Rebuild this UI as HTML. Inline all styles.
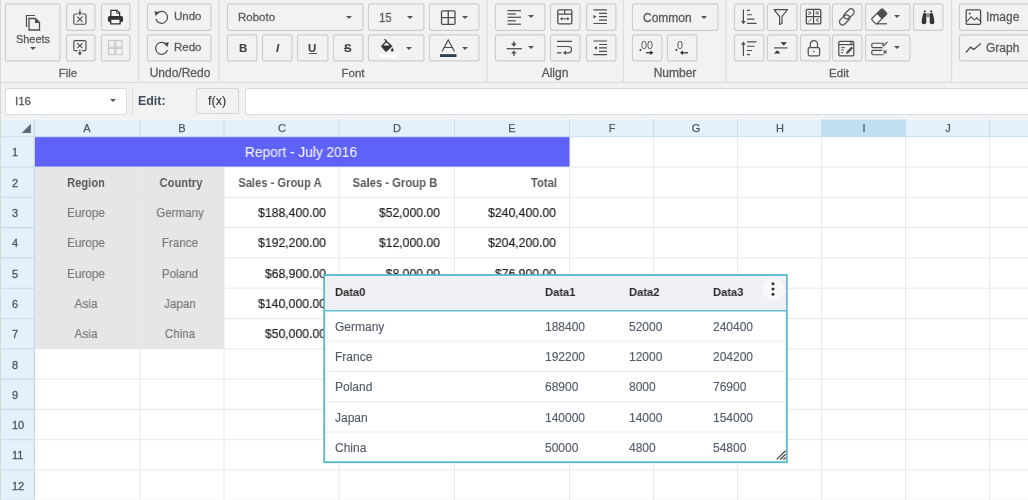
<!DOCTYPE html><html><head><meta charset="utf-8"><style>
*{box-sizing:border-box;margin:0;padding:0}
html,body{width:1028px;height:500px;overflow:hidden;background:#fff;font-family:"Liberation Sans",sans-serif}
.ab{position:absolute}
.btn{position:absolute;border:1px solid #d6d6d6;border-radius:2px;background:#f2f2f2}
.sep{position:absolute;top:0;width:1px;height:83px;background:#dcdcdc}
.caret{position:absolute;width:0;height:0;border-left:3.5px solid transparent;border-right:3.5px solid transparent;border-top:3.5px solid #555}
.t{position:absolute;white-space:nowrap;transform-origin:0 0;will-change:transform}
svg{position:absolute;overflow:visible}
.c{position:absolute;white-space:nowrap}
</style></head><body>
<div class="ab" style="left:0;top:0;width:1028px;height:83px;background:#f2f2f2"></div>
<div class="ab" style="left:0;top:82px;width:1028px;height:1px;background:#dadada"></div>
<div class="t" style="left:-81.80px;width:300px;text-align:center;top:68.07px;font-size:11.5px;line-height:11.5px;color:#5c5c5c;font-weight:normal;transform:scaleX(1.0);transform-origin:50% 0;-webkit-text-stroke:0.3px #5c5c5c;">File</div>
<div class="t" style="left:29.80px;width:300px;text-align:center;top:67.34px;font-size:12px;line-height:12px;color:#5c5c5c;font-weight:normal;transform:scaleX(1.0);transform-origin:50% 0;-webkit-text-stroke:0.3px #5c5c5c;">Undo/Redo</div>
<div class="t" style="left:203.00px;width:300px;text-align:center;top:67.87px;font-size:11.5px;line-height:11.5px;color:#5c5c5c;font-weight:normal;transform:scaleX(1.0);transform-origin:50% 0;-webkit-text-stroke:0.3px #5c5c5c;">Font</div>
<div class="t" style="left:405.30px;width:300px;text-align:center;top:67.44px;font-size:12px;line-height:12px;color:#5c5c5c;font-weight:normal;transform:scaleX(1.0);transform-origin:50% 0;-webkit-text-stroke:0.3px #5c5c5c;">Align</div>
<div class="t" style="left:524.70px;width:300px;text-align:center;top:67.44px;font-size:12px;line-height:12px;color:#5c5c5c;font-weight:normal;transform:scaleX(1.0);transform-origin:50% 0;-webkit-text-stroke:0.3px #5c5c5c;">Number</div>
<div class="t" style="left:688.50px;width:300px;text-align:center;top:67.87px;font-size:11.5px;line-height:11.5px;color:#5c5c5c;font-weight:normal;transform:scaleX(1.0);transform-origin:50% 0;-webkit-text-stroke:0.3px #5c5c5c;">Edit</div>
<div class="t" style="left:-117.50px;width:300px;text-align:center;top:34.09px;font-size:11px;line-height:11px;color:#5c5c5c;font-weight:normal;transform:scaleX(1.0);transform-origin:50% 0;-webkit-text-stroke:0.3px #5c5c5c;">Sheets</div>
<div class="caret" style="left:29.5px;top:47.0px;border-top-color:#555"></div>
<div class="t" style="left:174.30px;top:11.47px;font-size:11.5px;line-height:11.5px;color:#5c5c5c;font-weight:normal;-webkit-text-stroke:0.3px #5c5c5c;">Undo</div>
<div class="t" style="left:174.30px;top:42.07px;font-size:11.5px;line-height:11.5px;color:#5c5c5c;font-weight:normal;-webkit-text-stroke:0.3px #5c5c5c;">Redo</div>
<div class="t" style="left:237.60px;top:11.77px;font-size:11.5px;line-height:11.5px;color:#5c5c5c;font-weight:normal;-webkit-text-stroke:0.3px #5c5c5c;">Roboto</div>
<div class="caret" style="left:345.5px;top:15.5px;border-top-color:#555"></div>
<div class="t" style="left:379.20px;top:11.84px;font-size:12px;line-height:12px;color:#5c5c5c;font-weight:normal;transform:scaleX(0.94);-webkit-text-stroke:0.3px #5c5c5c;">15</div>
<div class="caret" style="left:406.5px;top:15.5px;border-top-color:#555"></div>
<div class="caret" style="left:461.5px;top:15.5px;border-top-color:#555"></div>
<div class="t" style="left:238.60px;top:42.87px;font-size:11.5px;line-height:11.5px;color:#444;font-weight:bold;-webkit-text-stroke:0.1px #444;">B</div>
<div class="t" style="left:276.20px;top:42.87px;font-size:11.5px;line-height:11.5px;color:#444;font-weight:bold;font-style:italic;-webkit-text-stroke:0.1px #444;">I</div>
<div class="t" style="left:308.30px;top:42.67px;font-size:11.5px;line-height:11.5px;color:#444;font-weight:bold;-webkit-text-stroke:0.1px #444;">U</div>
<div class="t" style="left:344.00px;top:42.67px;font-size:11.5px;line-height:11.5px;color:#444;font-weight:bold;-webkit-text-stroke:0.1px #444;">S</div>
<div class="ab" style="left:308.6px;top:53.4px;width:8px;height:1px;background:#555"></div>
<div class="ab" style="left:343.8px;top:48.3px;width:5px;height:1px;background:#444"></div>
<div class="caret" style="left:406.0px;top:46.5px;border-top-color:#555"></div>
<div class="caret" style="left:461.5px;top:46.5px;border-top-color:#555"></div>
<div class="caret" style="left:528.3px;top:15.0px;border-top-color:#555"></div>
<div class="caret" style="left:528.3px;top:46.3px;border-top-color:#555"></div>
<div class="t" style="left:643.00px;top:12.14px;font-size:12px;line-height:12px;color:#5c5c5c;font-weight:normal;-webkit-text-stroke:0.3px #5c5c5c;">Common</div>
<div class="caret" style="left:700.5px;top:15.5px;border-top-color:#555"></div>
<div class="caret" style="left:893.5px;top:15.0px;border-top-color:#555"></div>
<div class="caret" style="left:893.5px;top:46.0px;border-top-color:#555"></div>
<div class="t" style="left:986.30px;top:11.44px;font-size:12px;line-height:12px;color:#5c5c5c;font-weight:normal;-webkit-text-stroke:0.3px #5c5c5c;">Image</div>
<div class="t" style="left:986.30px;top:42.14px;font-size:12px;line-height:12px;color:#5c5c5c;font-weight:normal;-webkit-text-stroke:0.3px #5c5c5c;">Graph</div>
<svg style="left:0;top:0" width="1028" height="100"><rect x="138.0" y="0" width="1.2" height="82.5" fill="#dddddd"/><rect x="218.4" y="0" width="1.2" height="82.5" fill="#dddddd"/><rect x="486.4" y="0" width="1.2" height="82.5" fill="#dddddd"/><rect x="622.9" y="0" width="1.2" height="82.5" fill="#dddddd"/><rect x="725.4" y="0" width="1.2" height="82.5" fill="#dddddd"/><rect x="951.0" y="0" width="1.2" height="82.5" fill="#dddddd"/><rect x="5.5" y="3.9" width="54.4" height="57.00" rx="2" fill="none" stroke="#cdcdcd" stroke-width="1.15"/><rect x="66.5" y="3.9" width="28.4" height="26.40" rx="2" fill="none" stroke="#cdcdcd" stroke-width="1.15"/><rect x="101.5" y="3.9" width="28.4" height="26.40" rx="2" fill="none" stroke="#cdcdcd" stroke-width="1.15"/><rect x="66.5" y="34.8" width="28.4" height="26.10" rx="2" fill="none" stroke="#cdcdcd" stroke-width="1.15"/><rect x="101.5" y="34.8" width="28.4" height="26.10" rx="2" fill="none" stroke="#cdcdcd" stroke-width="1.15"/><rect x="147.5" y="3.9" width="63.4" height="26.40" rx="2" fill="none" stroke="#cdcdcd" stroke-width="1.15"/><rect x="147.5" y="34.8" width="63.4" height="26.10" rx="2" fill="none" stroke="#cdcdcd" stroke-width="1.15"/><rect x="227.5" y="3.9" width="135.4" height="26.40" rx="2" fill="none" stroke="#cdcdcd" stroke-width="1.15"/><rect x="368.5" y="3.9" width="55.4" height="26.40" rx="2" fill="none" stroke="#cdcdcd" stroke-width="1.15"/><rect x="429.5" y="3.9" width="49.4" height="26.40" rx="2" fill="none" stroke="#cdcdcd" stroke-width="1.15"/><rect x="227.5" y="34.8" width="29.4" height="26.10" rx="2" fill="none" stroke="#cdcdcd" stroke-width="1.15"/><rect x="262.5" y="34.8" width="29.4" height="26.10" rx="2" fill="none" stroke="#cdcdcd" stroke-width="1.15"/><rect x="297.5" y="34.8" width="30.4" height="26.10" rx="2" fill="none" stroke="#cdcdcd" stroke-width="1.15"/><rect x="333.5" y="34.8" width="29.4" height="26.10" rx="2" fill="none" stroke="#cdcdcd" stroke-width="1.15"/><rect x="368.5" y="34.8" width="55.4" height="26.10" rx="2" fill="none" stroke="#cdcdcd" stroke-width="1.15"/><rect x="429.5" y="34.8" width="49.4" height="26.10" rx="2" fill="none" stroke="#cdcdcd" stroke-width="1.15"/><rect x="495.5" y="3.9" width="49.4" height="26.40" rx="2" fill="none" stroke="#cdcdcd" stroke-width="1.15"/><rect x="550.5" y="3.9" width="29.4" height="26.40" rx="2" fill="none" stroke="#cdcdcd" stroke-width="1.15"/><rect x="586.5" y="3.9" width="29.4" height="26.40" rx="2" fill="none" stroke="#cdcdcd" stroke-width="1.15"/><rect x="495.5" y="34.8" width="49.4" height="26.10" rx="2" fill="none" stroke="#cdcdcd" stroke-width="1.15"/><rect x="550.5" y="34.8" width="29.4" height="26.10" rx="2" fill="none" stroke="#cdcdcd" stroke-width="1.15"/><rect x="586.5" y="34.8" width="29.4" height="26.10" rx="2" fill="none" stroke="#cdcdcd" stroke-width="1.15"/><rect x="632.5" y="3.9" width="85.4" height="26.40" rx="2" fill="none" stroke="#cdcdcd" stroke-width="1.15"/><rect x="632.5" y="34.8" width="29.4" height="26.10" rx="2" fill="none" stroke="#cdcdcd" stroke-width="1.15"/><rect x="667.5" y="34.8" width="29.4" height="26.10" rx="2" fill="none" stroke="#cdcdcd" stroke-width="1.15"/><rect x="734.5" y="3.9" width="29.4" height="26.40" rx="2" fill="none" stroke="#cdcdcd" stroke-width="1.15"/><rect x="767.5" y="3.9" width="29.4" height="26.40" rx="2" fill="none" stroke="#cdcdcd" stroke-width="1.15"/><rect x="800.5" y="3.9" width="29.4" height="26.40" rx="2" fill="none" stroke="#cdcdcd" stroke-width="1.15"/><rect x="832.5" y="3.9" width="29.4" height="26.40" rx="2" fill="none" stroke="#cdcdcd" stroke-width="1.15"/><rect x="865.5" y="3.9" width="44.4" height="26.40" rx="2" fill="none" stroke="#cdcdcd" stroke-width="1.15"/><rect x="913.5" y="3.9" width="29.4" height="26.40" rx="2" fill="none" stroke="#cdcdcd" stroke-width="1.15"/><rect x="734.5" y="34.8" width="29.4" height="26.10" rx="2" fill="none" stroke="#cdcdcd" stroke-width="1.15"/><rect x="767.5" y="34.8" width="29.4" height="26.10" rx="2" fill="none" stroke="#cdcdcd" stroke-width="1.15"/><rect x="800.5" y="34.8" width="29.4" height="26.10" rx="2" fill="none" stroke="#cdcdcd" stroke-width="1.15"/><rect x="832.5" y="34.8" width="29.4" height="26.10" rx="2" fill="none" stroke="#cdcdcd" stroke-width="1.15"/><rect x="865.5" y="34.8" width="44.4" height="26.10" rx="2" fill="none" stroke="#cdcdcd" stroke-width="1.15"/><rect x="959.5" y="3.9" width="80.4" height="26.40" rx="2" fill="none" stroke="#cdcdcd" stroke-width="1.15"/><rect x="959.5" y="34.8" width="80.4" height="26.10" rx="2" fill="none" stroke="#cdcdcd" stroke-width="1.15"/></svg>
<svg style="left:0;top:0" width="1028" height="100"><path d="M26.5 27 V15.5 H35" fill="none" stroke="#4d4d4d" stroke-width="1.2"/><path d="M29 18.5 H35.5 L39.5 22.5 V30 H29 Z" fill="#f2f2f2" stroke="#4d4d4d" stroke-width="1.3"/><path d="M35 18.5 L39.5 23 H35 Z" fill="#4d4d4d"/><path d="M77.6 14 H75 Q73.8 14 73.8 15.2 V23 Q73.8 24.2 75 24.2 H84.8 Q86 24.2 86 23 V15.2 Q86 14 84.8 14 H82.2" fill="none" stroke="#4d4d4d" stroke-width="1.15"/><path d="M79.9 9.6 V13.5" stroke="#4d4d4d" stroke-width="1.1"/><path d="M77.7 12.6 L79.9 15.4 L82.1 12.6 Z" fill="#4d4d4d"/><path d="M77.3 16.6 L82.5 21.8 M82.5 16.6 L77.3 21.8" stroke="#4d4d4d" stroke-width="1.15"/><path d="M77.6 50.6 H75 Q73.8 50.6 73.8 49.4 V41.8 Q73.8 40.6 75 40.6 H84.8 Q86 40.6 86 41.8 V49.4 Q86 50.6 84.8 50.6 H82.2" fill="none" stroke="#4d4d4d" stroke-width="1.15"/><path d="M79.9 49.5 V53" stroke="#4d4d4d" stroke-width="1.1"/><path d="M77.7 52.4 L79.9 55.4 L82.1 52.4 Z" fill="#4d4d4d"/><path d="M77.3 43.2 L82.5 48.2 M82.5 43.2 L77.3 48.2" stroke="#4d4d4d" stroke-width="1.15"/><path d="M110.9 16.5 V10.4 H117 L119.6 13 V16.5" fill="#fafafa" stroke="#333" stroke-width="1.3"/><path d="M116.6 10.4 V13.4 H119.6" fill="none" stroke="#333" stroke-width="0.8"/><rect x="107.9" y="15.9" width="15.1" height="6.2" rx="1.6" fill="#333"/><path d="M110.7 19.8 V23.8 H120.1 V19.8" fill="#fafafa" stroke="#333" stroke-width="1.3"/><rect x="108.4" y="40.6" width="13.6" height="14.1" fill="none" stroke="#c6c6c6" stroke-width="1.1"/><path d="M114.6 40.6 V54.7 M116 40.6 V54.7 M108.4 47 H122 M108.4 48.4 H122" stroke="#c6c6c6" stroke-width="1"/><path d="M157.2 13.2 A6 6 0 1 1 155.8 19" fill="none" stroke="#4d4d4d" stroke-width="1.2"/><path d="M154.5 11 L159.5 12.5 L155.5 16 Z" fill="#4d4d4d"/><path d="M166 44.2 A6 6 0 1 0 167.4 50" fill="none" stroke="#4d4d4d" stroke-width="1.2"/><path d="M168.7 42 L163.7 43.5 L167.7 47 Z" fill="#4d4d4d"/><rect x="441.5" y="10.8" width="13.5" height="13.5" rx="1" fill="none" stroke="#4d4d4d" stroke-width="1.3"/><path d="M448.25 10.8 V24.3 M441.5 17.55 H455" stroke="#4d4d4d" stroke-width="1.3"/><path d="M381.2 46.3 L386.3 40.8 L392.2 46.2 L385.9 51.8 Z" fill="#333" stroke="#333" stroke-width="0.6" stroke-linejoin="round"/><path d="M383.3 45.6 L386.3 42.6 L389.7 45.6 Z" fill="#fafafa"/><path d="M384.6 39.2 L386.6 41.4" stroke="#333" stroke-width="1.3"/><path d="M392.3 47.6 Q390.6 50 391.2 50.9 Q392.3 52 393.4 50.9 Q394 50 392.3 47.6 Z" fill="#333"/><rect x="379.1" y="54.5" width="16.8" height="2.9" fill="#fff"/><path d="M442 51.5 L448.2 40 L454.5 51.5 M444 47.5 H452.5" fill="none" stroke="#4d4d4d" stroke-width="1.2"/><rect x="440" y="54.2" width="16.5" height="2.8" fill="#2c3e50"/><path d="M507.5 10.6 H521.0" stroke="#4d4d4d" stroke-width="1.2"/><path d="M507.5 14 H515.8" stroke="#4d4d4d" stroke-width="1.2"/><path d="M507.5 17.3 H521.0" stroke="#4d4d4d" stroke-width="1.2"/><path d="M507.5 20.8 H515.8" stroke="#4d4d4d" stroke-width="1.2"/><path d="M507.5 24.2 H521.0" stroke="#4d4d4d" stroke-width="1.2"/><path d="M506.7 48.7 H521.9" stroke="#4d4d4d" stroke-width="1.3"/><path d="M513.9 41.3 V44.5 M513.9 53 V56" stroke="#4d4d4d" stroke-width="1.3"/><path d="M511.1 43.6 L513.9 46.7 L516.7 43.6 Z M511.1 53.6 L513.9 50.5 L516.7 53.6 Z" fill="#4d4d4d"/><rect x="557.8" y="9.8" width="14" height="14" rx="1.2" fill="none" stroke="#4d4d4d" stroke-width="1.3"/><path d="M557.8 14.2 H571.8 M564.8 9.8 V14.2" stroke="#4d4d4d" stroke-width="1.2"/><path d="M561 18.8 H568.5" stroke="#4d4d4d" stroke-width="1"/><path d="M560 18.8 L562.3 17 V20.6 Z M569.5 18.8 L567.2 17 V20.6 Z" fill="#4d4d4d"/><path d="M593.5 9.8 H607 M599 13.3 H607 M599 16.7 H607 M599 20.1 H607 M593.5 23.5 H607" stroke="#4d4d4d" stroke-width="1.2"/><path d="M593.5 14.8 L596.5 16.7 L593.5 18.6 Z" fill="#4d4d4d"/><path d="M557 41.3 H572 M557 46.5 H568 Q571.5 46.5 571.5 49.2 Q571.5 52.8 568 52.8 H565.5 M557 52.8 H561.5" fill="none" stroke="#4d4d4d" stroke-width="1.2"/><path d="M563 52.8 L566 50.6 V55 Z" fill="#4d4d4d"/><path d="M593.5 41 H607 M599 44.5 H607 M599 47.9 H607 M599 51.3 H607 M593.5 54.7 H607" stroke="#4d4d4d" stroke-width="1.2"/><path d="M597 46 L594 47.9 L597 49.8 Z" fill="#4d4d4d"/><circle cx="640.4" cy="50" r="0.9" fill="#222"/><text x="641" y="49" font-family="Liberation Sans" font-size="11.5" fill="#555" textLength="12" lengthAdjust="spacingAndGlyphs">00</text><path d="M646 52.8 H651" stroke="#222" stroke-width="1.2"/><path d="M650.3 50.6 L653.3 52.8 L650.3 55 Z" fill="#222"/><circle cx="676.4" cy="50" r="0.9" fill="#222"/><text x="677" y="49" font-family="Liberation Sans" font-size="11.5" fill="#555" textLength="6" lengthAdjust="spacingAndGlyphs">0</text><path d="M682 52.8 H688" stroke="#222" stroke-width="1.2"/><path d="M683 50.6 L680 52.8 L683 55 Z" fill="#222"/><path d="M743.4 9.5 V22" stroke="#4d4d4d" stroke-width="1.2"/><path d="M741 21 L743.4 24.2 L745.8 21 Z" fill="#4d4d4d"/><path d="M747 10.4 H750 M747 14.8 H752 M747 19.1 H754.5 M747 23.4 H756.5" stroke="#4d4d4d" stroke-width="1.1"/><path d="M774 9.6 H787.5 L782 16.5 V23.5 L779.6 24.5 V16.5 Z" fill="none" stroke="#4d4d4d" stroke-width="1.2" stroke-linejoin="round"/><rect x="806.3" y="9.4" width="14.5" height="14.5" rx="1.2" fill="none" stroke="#4d4d4d" stroke-width="1.3"/><path d="M813.55 9.4 V23.9 M806.3 16.65 H820.8" stroke="#4d4d4d" stroke-width="1.1"/><path d="M808.2 11.6 L811 13.1 L808.2 14.6 M815.5 12 H819 M815.5 13.8 H819 M811.5 18.8 L808.5 21.8 M818.8 18.5 L816 20.1 L818.8 21.8" fill="none" stroke="#4d4d4d" stroke-width="0.9"/><g transform="translate(846.8 16.9) rotate(-45)" fill="none" stroke="#555" stroke-width="1.3"><rect x="-9.6" y="-2.6" width="11.8" height="6.2" rx="3.1"/><rect x="-2.2" y="-3.6" width="11.8" height="6.2" rx="3.1"/></g><g transform="translate(879.2 16.4) rotate(-45)"><rect x="-7.6" y="-3.6" width="15.2" height="7.2" rx="1" fill="#fafafa" stroke="#4d4d4d" stroke-width="1.2"/><rect x="0" y="-3.6" width="7.6" height="7.2" fill="#4d4d4d"/></g><path d="M876.6 23.8 H887" stroke="#4d4d4d" stroke-width="1.2"/><path d="M923.2 13.2 Q921.6 19 921.6 22.5 Q921.8 24.2 923.8 24.2 Q926.2 24.2 926.3 22.5 V13.2 Z M932.8 13.2 Q934.4 19 934.4 22.5 Q934.2 24.2 932.2 24.2 Q929.8 24.2 929.7 22.5 V13.2 Z" fill="#333"/><rect x="923.6" y="10.4" width="2.2" height="2" rx="0.8" fill="#333"/><rect x="930.2" y="10.4" width="2.2" height="2" rx="0.8" fill="#333"/><rect x="926" y="13.5" width="4" height="3.6" fill="#888"/><path d="M743.4 44 V56" stroke="#4d4d4d" stroke-width="1.2"/><path d="M741 44.8 L743.4 41.5 L745.8 44.8 Z" fill="#4d4d4d"/><path d="M747 41.9 H756.5 M747 46.2 H754.5 M747 50.5 H752 M747 54.6 H750" stroke="#4d4d4d" stroke-width="1.1"/><path d="M774 47.9 H787.5" stroke="#4d4d4d" stroke-width="1.2"/><path d="M780.5 42.3 H787 L783.75 45.6 Z M774 53.6 H780.5 L777.25 50.3 Z" fill="#333"/><path d="M810.3 47.5 V44.3 A3.6 3.6 0 0 1 817.5 44.3 V47.5" fill="none" stroke="#4d4d4d" stroke-width="1.2"/><rect x="808.2" y="47.6" width="11.4" height="8.2" rx="1.2" fill="none" stroke="#4d4d4d" stroke-width="1.2"/><circle cx="813.9" cy="51.6" r="0.8" fill="#4d4d4d"/><rect x="838.8" y="41.3" width="15" height="14.5" rx="1" fill="none" stroke="#4d4d4d" stroke-width="1.2"/><path d="M838.8 44.6 H853.8" stroke="#4d4d4d" stroke-width="1.2"/><circle cx="851.3" cy="43" r="1" fill="none" stroke="#4d4d4d" stroke-width="0.8"/><path d="M841 47.6 H845 M841 50 H844 M841 52.5 H843" stroke="#4d4d4d" stroke-width="0.9"/><path d="M846 54 L846.7 51.5 L851.5 46.6 L853 48.2 L848.2 53.2 Z" fill="#4d4d4d"/><rect x="871.8" y="43.2" width="12.4" height="4.4" rx="1.2" fill="none" stroke="#4d4d4d" stroke-width="1.15"/><rect x="871.8" y="50.3" width="12.4" height="4.4" rx="1.2" fill="none" stroke="#4d4d4d" stroke-width="1.15"/><path d="M881 44.6 L883.5 46.6 L888 41.6" fill="none" stroke="#f2f2f2" stroke-width="2.6"/><path d="M881.8 44.3 L883.6 45.9 L887.4 41.9" fill="none" stroke="#4d4d4d" stroke-width="1.1"/><path d="M882.5 49.6 L887.4 54 M887.4 49.6 L882.5 54" stroke="#f2f2f2" stroke-width="2.4"/><path d="M883.6 50.4 L886.6 53.4 M886.6 50.4 L883.6 53.4" stroke="#4d4d4d" stroke-width="1.1"/><rect x="966.2" y="9.9" width="14.4" height="14.4" rx="1" fill="none" stroke="#4d4d4d" stroke-width="1.3"/><path d="M967 21.5 L971 16.8 L974.5 19.8 L976.8 17.8 L980 20.8" fill="none" stroke="#4d4d4d" stroke-width="1.1"/><circle cx="969.7" cy="13.4" r="1" fill="#4d4d4d"/><path d="M966 52.5 L970.5 47.2 L973.8 49.4 L980.8 43.6" fill="none" stroke="#4d4d4d" stroke-width="1.3"/></svg>
<div class="ab" style="left:0;top:83px;width:1028px;height:36px;background:#f2f2f2"></div>
<div class="ab" style="left:4.6px;top:88px;width:122.6px;height:26.8px;background:#fff;border:1px solid #d3dde8;border-radius:2px"></div>
<div class="t" style="left:14.60px;top:96.37px;font-size:11.5px;line-height:11.5px;color:#5c5c5c;font-weight:normal;-webkit-text-stroke:0.3px #5c5c5c;">I16</div>
<div class="caret" style="left:110.1px;top:99.3px;border-top-color:#555"></div>
<div class="ab" style="left:132px;top:87px;width:1px;height:29px;background:#dcdcdc"></div>
<div class="t" style="left:138.20px;top:95.10px;font-size:12.4px;line-height:12.4px;color:#3f4c5b;font-weight:bold;">Edit:</div>
<div class="ab" style="left:196px;top:88px;width:43px;height:26px;border:1px solid #d6d6d6;border-radius:2px;background:#f2f2f2"></div>
<div class="t" style="left:208.00px;top:95.34px;font-size:12px;line-height:12px;color:#333;font-weight:normal;transform:scaleX(1.05);-webkit-text-stroke:0.1px #333;">f(x)</div>
<div class="ab" style="left:245px;top:88px;width:800px;height:27px;background:#fff;border:1px solid #d3dde8;border-radius:2px"></div>
<div class="ab" style="left:0;top:0;width:1px;height:500px;background:#d8d8d8"></div>
<svg style="left:0;top:0" width="1028" height="500"><rect x="1" y="119" width="1027" height="381" fill="#fff"/><rect x="1" y="119.5" width="1027" height="17.5" fill="#e4f1fa"/><rect x="821.5" y="119.5" width="84.0" height="17.3" fill="#c1dff2"/><rect x="1" y="136.7" width="33.5" height="364" fill="#e4f1fa"/><rect x="34.5" y="167.0" width="189.5" height="181.79999999999995" fill="#e6e6e6"/><line x1="140" y1="137" x2="140" y2="500" stroke="#e6e8eb" stroke-width="1"/><line x1="224" y1="137" x2="224" y2="500" stroke="#e6e8eb" stroke-width="1"/><line x1="339" y1="137" x2="339" y2="500" stroke="#e6e8eb" stroke-width="1"/><line x1="454.5" y1="137" x2="454.5" y2="500" stroke="#e6e8eb" stroke-width="1"/><line x1="569.5" y1="137" x2="569.5" y2="500" stroke="#e6e8eb" stroke-width="1"/><line x1="653.7" y1="137" x2="653.7" y2="500" stroke="#e6e8eb" stroke-width="1"/><line x1="737.6" y1="137" x2="737.6" y2="500" stroke="#e6e8eb" stroke-width="1"/><line x1="821.5" y1="137" x2="821.5" y2="500" stroke="#e6e8eb" stroke-width="1"/><line x1="905.5" y1="137" x2="905.5" y2="500" stroke="#e6e8eb" stroke-width="1"/><line x1="989.6" y1="137" x2="989.6" y2="500" stroke="#e6e8eb" stroke-width="1"/><line x1="1073.6" y1="137" x2="1073.6" y2="500" stroke="#e6e8eb" stroke-width="1"/><line x1="35" y1="167.00" x2="1028" y2="167.00" stroke="#e6e8eb" stroke-width="1"/><line x1="35" y1="197.30" x2="1028" y2="197.30" stroke="#e6e8eb" stroke-width="1"/><line x1="35" y1="227.60" x2="1028" y2="227.60" stroke="#e6e8eb" stroke-width="1"/><line x1="35" y1="257.90" x2="1028" y2="257.90" stroke="#e6e8eb" stroke-width="1"/><line x1="35" y1="288.20" x2="1028" y2="288.20" stroke="#e6e8eb" stroke-width="1"/><line x1="35" y1="318.50" x2="1028" y2="318.50" stroke="#e6e8eb" stroke-width="1"/><line x1="35" y1="348.80" x2="1028" y2="348.80" stroke="#e6e8eb" stroke-width="1"/><line x1="35" y1="379.10" x2="1028" y2="379.10" stroke="#e6e8eb" stroke-width="1"/><line x1="35" y1="409.40" x2="1028" y2="409.40" stroke="#e6e8eb" stroke-width="1"/><line x1="35" y1="439.70" x2="1028" y2="439.70" stroke="#e6e8eb" stroke-width="1"/><line x1="35" y1="470.00" x2="1028" y2="470.00" stroke="#e6e8eb" stroke-width="1"/><line x1="35" y1="500.30" x2="1028" y2="500.30" stroke="#e6e8eb" stroke-width="1"/><rect x="34.5" y="136.8" width="535.0" height="29.80" fill="#5f62f8"/><line x1="140" y1="119" x2="140" y2="136.5" stroke="#cbdeeb" stroke-width="1.1"/><line x1="224" y1="119" x2="224" y2="136.5" stroke="#cbdeeb" stroke-width="1.1"/><line x1="339" y1="119" x2="339" y2="136.5" stroke="#cbdeeb" stroke-width="1.1"/><line x1="454.5" y1="119" x2="454.5" y2="136.5" stroke="#cbdeeb" stroke-width="1.1"/><line x1="569.5" y1="119" x2="569.5" y2="136.5" stroke="#cbdeeb" stroke-width="1.1"/><line x1="653.7" y1="119" x2="653.7" y2="136.5" stroke="#cbdeeb" stroke-width="1.1"/><line x1="737.6" y1="119" x2="737.6" y2="136.5" stroke="#cbdeeb" stroke-width="1.1"/><line x1="821.5" y1="119" x2="821.5" y2="136.5" stroke="#cbdeeb" stroke-width="1.1"/><line x1="905.5" y1="119" x2="905.5" y2="136.5" stroke="#cbdeeb" stroke-width="1.1"/><line x1="989.6" y1="119" x2="989.6" y2="136.5" stroke="#cbdeeb" stroke-width="1.1"/><line x1="1073.6" y1="119" x2="1073.6" y2="136.5" stroke="#cbdeeb" stroke-width="1.1"/><line x1="1" y1="136.7" x2="1028" y2="136.7" stroke="#c9deec" stroke-width="1"/><line x1="1" y1="167.00" x2="34.5" y2="167.00" stroke="#c6dbe9" stroke-width="1.1"/><line x1="1" y1="197.30" x2="34.5" y2="197.30" stroke="#c6dbe9" stroke-width="1.1"/><line x1="1" y1="227.60" x2="34.5" y2="227.60" stroke="#c6dbe9" stroke-width="1.1"/><line x1="1" y1="257.90" x2="34.5" y2="257.90" stroke="#c6dbe9" stroke-width="1.1"/><line x1="1" y1="288.20" x2="34.5" y2="288.20" stroke="#c6dbe9" stroke-width="1.1"/><line x1="1" y1="318.50" x2="34.5" y2="318.50" stroke="#c6dbe9" stroke-width="1.1"/><line x1="1" y1="348.80" x2="34.5" y2="348.80" stroke="#c6dbe9" stroke-width="1.1"/><line x1="1" y1="379.10" x2="34.5" y2="379.10" stroke="#c6dbe9" stroke-width="1.1"/><line x1="1" y1="409.40" x2="34.5" y2="409.40" stroke="#c6dbe9" stroke-width="1.1"/><line x1="1" y1="439.70" x2="34.5" y2="439.70" stroke="#c6dbe9" stroke-width="1.1"/><line x1="1" y1="470.00" x2="34.5" y2="470.00" stroke="#c6dbe9" stroke-width="1.1"/><line x1="1" y1="500.30" x2="34.5" y2="500.30" stroke="#c6dbe9" stroke-width="1.1"/><line x1="34.4" y1="119" x2="34.4" y2="500" stroke="#c4d8e6" stroke-width="1.2"/><polygon points="30.9,123.7 30.9,132.9 21.7,132.9" fill="#5b6b7b"/></svg>
<div class="t" style="left:-62.75px;width:300px;text-align:center;top:123.09px;font-size:11px;line-height:11px;color:#4a5765;font-weight:normal;transform:scaleX(1.0);transform-origin:50% 0;-webkit-text-stroke:0.25px #4a5765;">A</div>
<div class="t" style="left:32.00px;width:300px;text-align:center;top:123.09px;font-size:11px;line-height:11px;color:#4a5765;font-weight:normal;transform:scaleX(1.0);transform-origin:50% 0;-webkit-text-stroke:0.25px #4a5765;">B</div>
<div class="t" style="left:131.50px;width:300px;text-align:center;top:123.09px;font-size:11px;line-height:11px;color:#4a5765;font-weight:normal;transform:scaleX(1.0);transform-origin:50% 0;-webkit-text-stroke:0.25px #4a5765;">C</div>
<div class="t" style="left:246.75px;width:300px;text-align:center;top:123.09px;font-size:11px;line-height:11px;color:#4a5765;font-weight:normal;transform:scaleX(1.0);transform-origin:50% 0;-webkit-text-stroke:0.25px #4a5765;">D</div>
<div class="t" style="left:362.00px;width:300px;text-align:center;top:123.09px;font-size:11px;line-height:11px;color:#4a5765;font-weight:normal;transform:scaleX(1.0);transform-origin:50% 0;-webkit-text-stroke:0.25px #4a5765;">E</div>
<div class="t" style="left:461.60px;width:300px;text-align:center;top:123.09px;font-size:11px;line-height:11px;color:#4a5765;font-weight:normal;transform:scaleX(1.0);transform-origin:50% 0;-webkit-text-stroke:0.25px #4a5765;">F</div>
<div class="t" style="left:545.65px;width:300px;text-align:center;top:123.09px;font-size:11px;line-height:11px;color:#4a5765;font-weight:normal;transform:scaleX(1.0);transform-origin:50% 0;-webkit-text-stroke:0.25px #4a5765;">G</div>
<div class="t" style="left:629.55px;width:300px;text-align:center;top:123.09px;font-size:11px;line-height:11px;color:#4a5765;font-weight:normal;transform:scaleX(1.0);transform-origin:50% 0;-webkit-text-stroke:0.25px #4a5765;">H</div>
<div class="t" style="left:713.50px;width:300px;text-align:center;top:123.09px;font-size:11px;line-height:11px;color:#4a5765;font-weight:normal;transform:scaleX(1.0);transform-origin:50% 0;-webkit-text-stroke:0.25px #4a5765;">I</div>
<div class="t" style="left:797.55px;width:300px;text-align:center;top:123.09px;font-size:11px;line-height:11px;color:#4a5765;font-weight:normal;transform:scaleX(1.0);transform-origin:50% 0;-webkit-text-stroke:0.25px #4a5765;">J</div>
<div class="t" style="left:881.60px;width:300px;text-align:center;top:123.09px;font-size:11px;line-height:11px;color:#4a5765;font-weight:normal;transform:scaleX(1.0);transform-origin:50% 0;-webkit-text-stroke:0.25px #4a5765;">K</div>
<div class="t" style="left:12.30px;top:147.49px;font-size:11px;line-height:11px;color:#4a5765;font-weight:normal;-webkit-text-stroke:0.3px #4a5765;">1</div>
<div class="t" style="left:12.30px;top:177.79px;font-size:11px;line-height:11px;color:#4a5765;font-weight:normal;-webkit-text-stroke:0.3px #4a5765;">2</div>
<div class="t" style="left:12.30px;top:208.09px;font-size:11px;line-height:11px;color:#4a5765;font-weight:normal;-webkit-text-stroke:0.3px #4a5765;">3</div>
<div class="t" style="left:12.30px;top:238.39px;font-size:11px;line-height:11px;color:#4a5765;font-weight:normal;-webkit-text-stroke:0.3px #4a5765;">4</div>
<div class="t" style="left:12.30px;top:268.69px;font-size:11px;line-height:11px;color:#4a5765;font-weight:normal;-webkit-text-stroke:0.3px #4a5765;">5</div>
<div class="t" style="left:12.30px;top:298.99px;font-size:11px;line-height:11px;color:#4a5765;font-weight:normal;-webkit-text-stroke:0.3px #4a5765;">6</div>
<div class="t" style="left:12.30px;top:329.29px;font-size:11px;line-height:11px;color:#4a5765;font-weight:normal;-webkit-text-stroke:0.3px #4a5765;">7</div>
<div class="t" style="left:12.30px;top:359.59px;font-size:11px;line-height:11px;color:#4a5765;font-weight:normal;-webkit-text-stroke:0.3px #4a5765;">8</div>
<div class="t" style="left:12.30px;top:389.89px;font-size:11px;line-height:11px;color:#4a5765;font-weight:normal;-webkit-text-stroke:0.3px #4a5765;">9</div>
<div class="t" style="left:12.30px;top:420.19px;font-size:11px;line-height:11px;color:#4a5765;font-weight:normal;-webkit-text-stroke:0.3px #4a5765;">10</div>
<div class="t" style="left:12.30px;top:450.49px;font-size:11px;line-height:11px;color:#4a5765;font-weight:normal;-webkit-text-stroke:0.3px #4a5765;">11</div>
<div class="t" style="left:12.30px;top:480.79px;font-size:11px;line-height:11px;color:#4a5765;font-weight:normal;-webkit-text-stroke:0.3px #4a5765;">12</div>
<div class="t" style="left:150.50px;width:300px;text-align:center;top:145.45px;font-size:14px;line-height:14px;color:#f0f0ff;font-weight:normal;transform:scaleX(0.98);transform-origin:50% 0;-webkit-text-stroke:0.1px #f0f0ff;">Report - July 2016</div>
<div class="t" style="left:-64.00px;width:300px;text-align:center;top:176.00px;font-size:13px;line-height:13px;color:#5a5a5a;font-weight:bold;transform:scaleX(0.86);transform-origin:50% 0;">Region</div>
<div class="t" style="left:30.70px;width:300px;text-align:center;top:176.00px;font-size:13px;line-height:13px;color:#5a5a5a;font-weight:bold;transform:scaleX(0.86);transform-origin:50% 0;">Country</div>
<div class="t" style="left:130.30px;width:300px;text-align:center;top:176.00px;font-size:13px;line-height:13px;color:#5a5a5a;font-weight:bold;transform:scaleX(0.86);transform-origin:50% 0;">Sales - Group A</div>
<div class="t" style="left:245.20px;width:300px;text-align:center;top:176.00px;font-size:13px;line-height:13px;color:#5a5a5a;font-weight:bold;transform:scaleX(0.87);transform-origin:50% 0;">Sales - Group B</div>
<div class="t" style="left:257.00px;width:300px;text-align:right;top:176.00px;font-size:13px;line-height:13px;color:#5a5a5a;font-weight:bold;transform:scaleX(0.87);transform-origin:100% 0;">Total</div>
<div class="t" style="left:-64.00px;width:300px;text-align:center;top:206.00px;font-size:13px;line-height:13px;color:#7a7a7a;font-weight:normal;transform:scaleX(0.9);transform-origin:50% 0;-webkit-text-stroke:0.2px #7a7a7a;">Europe</div>
<div class="t" style="left:30.30px;width:300px;text-align:center;top:206.00px;font-size:13px;line-height:13px;color:#7a7a7a;font-weight:normal;transform:scaleX(0.89);transform-origin:50% 0;-webkit-text-stroke:0.2px #7a7a7a;">Germany</div>
<div class="t" style="left:25.70px;width:300px;text-align:right;top:206.00px;font-size:13px;line-height:13px;color:#1e1e1e;font-weight:normal;transform:scaleX(0.94);transform-origin:100% 0;-webkit-text-stroke:0.2px #1e1e1e;">$188,400.00</div>
<div class="t" style="left:140.20px;width:300px;text-align:right;top:206.00px;font-size:13px;line-height:13px;color:#1e1e1e;font-weight:normal;transform:scaleX(0.94);transform-origin:100% 0;-webkit-text-stroke:0.2px #1e1e1e;">$52,000.00</div>
<div class="t" style="left:255.60px;width:300px;text-align:right;top:206.00px;font-size:13px;line-height:13px;color:#1e1e1e;font-weight:normal;transform:scaleX(0.94);transform-origin:100% 0;-webkit-text-stroke:0.2px #1e1e1e;">$240,400.00</div>
<div class="t" style="left:-64.00px;width:300px;text-align:center;top:236.30px;font-size:13px;line-height:13px;color:#7a7a7a;font-weight:normal;transform:scaleX(0.9);transform-origin:50% 0;-webkit-text-stroke:0.2px #7a7a7a;">Europe</div>
<div class="t" style="left:30.30px;width:300px;text-align:center;top:236.30px;font-size:13px;line-height:13px;color:#7a7a7a;font-weight:normal;transform:scaleX(0.89);transform-origin:50% 0;-webkit-text-stroke:0.2px #7a7a7a;">France</div>
<div class="t" style="left:25.70px;width:300px;text-align:right;top:236.30px;font-size:13px;line-height:13px;color:#1e1e1e;font-weight:normal;transform:scaleX(0.94);transform-origin:100% 0;-webkit-text-stroke:0.2px #1e1e1e;">$192,200.00</div>
<div class="t" style="left:140.20px;width:300px;text-align:right;top:236.30px;font-size:13px;line-height:13px;color:#1e1e1e;font-weight:normal;transform:scaleX(0.94);transform-origin:100% 0;-webkit-text-stroke:0.2px #1e1e1e;">$12,000.00</div>
<div class="t" style="left:255.60px;width:300px;text-align:right;top:236.30px;font-size:13px;line-height:13px;color:#1e1e1e;font-weight:normal;transform:scaleX(0.94);transform-origin:100% 0;-webkit-text-stroke:0.2px #1e1e1e;">$204,200.00</div>
<div class="t" style="left:-64.00px;width:300px;text-align:center;top:266.60px;font-size:13px;line-height:13px;color:#7a7a7a;font-weight:normal;transform:scaleX(0.9);transform-origin:50% 0;-webkit-text-stroke:0.2px #7a7a7a;">Europe</div>
<div class="t" style="left:30.30px;width:300px;text-align:center;top:266.60px;font-size:13px;line-height:13px;color:#7a7a7a;font-weight:normal;transform:scaleX(0.89);transform-origin:50% 0;-webkit-text-stroke:0.2px #7a7a7a;">Poland</div>
<div class="t" style="left:25.70px;width:300px;text-align:right;top:266.60px;font-size:13px;line-height:13px;color:#1e1e1e;font-weight:normal;transform:scaleX(0.94);transform-origin:100% 0;-webkit-text-stroke:0.2px #1e1e1e;">$68,900.00</div>
<div class="t" style="left:140.20px;width:300px;text-align:right;top:266.60px;font-size:13px;line-height:13px;color:#1e1e1e;font-weight:normal;transform:scaleX(0.94);transform-origin:100% 0;-webkit-text-stroke:0.2px #1e1e1e;">$8,000.00</div>
<div class="t" style="left:255.60px;width:300px;text-align:right;top:266.60px;font-size:13px;line-height:13px;color:#1e1e1e;font-weight:normal;transform:scaleX(0.94);transform-origin:100% 0;-webkit-text-stroke:0.2px #1e1e1e;">$76,900.00</div>
<div class="t" style="left:-64.00px;width:300px;text-align:center;top:296.90px;font-size:13px;line-height:13px;color:#7a7a7a;font-weight:normal;transform:scaleX(0.9);transform-origin:50% 0;-webkit-text-stroke:0.2px #7a7a7a;">Asia</div>
<div class="t" style="left:30.30px;width:300px;text-align:center;top:296.90px;font-size:13px;line-height:13px;color:#7a7a7a;font-weight:normal;transform:scaleX(0.89);transform-origin:50% 0;-webkit-text-stroke:0.2px #7a7a7a;">Japan</div>
<div class="t" style="left:25.70px;width:300px;text-align:right;top:296.90px;font-size:13px;line-height:13px;color:#1e1e1e;font-weight:normal;transform:scaleX(0.94);transform-origin:100% 0;-webkit-text-stroke:0.2px #1e1e1e;">$140,000.00</div>
<div class="t" style="left:-64.00px;width:300px;text-align:center;top:327.20px;font-size:13px;line-height:13px;color:#7a7a7a;font-weight:normal;transform:scaleX(0.9);transform-origin:50% 0;-webkit-text-stroke:0.2px #7a7a7a;">Asia</div>
<div class="t" style="left:30.30px;width:300px;text-align:center;top:327.20px;font-size:13px;line-height:13px;color:#7a7a7a;font-weight:normal;transform:scaleX(0.89);transform-origin:50% 0;-webkit-text-stroke:0.2px #7a7a7a;">China</div>
<div class="t" style="left:25.70px;width:300px;text-align:right;top:327.20px;font-size:13px;line-height:13px;color:#1e1e1e;font-weight:normal;transform:scaleX(0.94);transform-origin:100% 0;-webkit-text-stroke:0.2px #1e1e1e;">$50,000.00</div>
<svg style="left:0;top:0" width="1028" height="500"><rect x="324.2" y="275.0" width="462.6" height="187.2" fill="#fff" stroke="#55b7cf" stroke-width="1.8"/><rect x="325.4" y="276.4" width="460.7" height="34.2" fill="#f0f1f6"/><line x1="325" y1="310.8" x2="786.5" y2="310.8" stroke="#62bdd6" stroke-width="1.5"/><line x1="326" y1="341.10" x2="786" y2="341.10" stroke="#ebebeb" stroke-width="1"/><line x1="326" y1="371.40" x2="786" y2="371.40" stroke="#ebebeb" stroke-width="1"/><line x1="326" y1="401.70" x2="786" y2="401.70" stroke="#ebebeb" stroke-width="1"/><line x1="326" y1="432.00" x2="786" y2="432.00" stroke="#ebebeb" stroke-width="1"/><circle cx="773" cy="289" r="11" fill="#f8f8fb"/><circle cx="773" cy="283.8" r="1.5" fill="#2e2e2e"/><circle cx="773" cy="289" r="1.5" fill="#2e2e2e"/><circle cx="773" cy="294.2" r="1.5" fill="#2e2e2e"/><path d="M776.6 459.4 L785.6 450.8 M780 459.5 L785.6 454.2 M783.4 459.5 L785.6 457.4" stroke="#444" stroke-width="1.2"/></svg>
<div class="t" style="left:335.00px;top:287.47px;font-size:11.5px;line-height:11.5px;color:#2b2b2b;font-weight:bold;transform:scaleX(0.97);">Data0</div>
<div class="t" style="left:545.00px;top:287.47px;font-size:11.5px;line-height:11.5px;color:#2b2b2b;font-weight:bold;transform:scaleX(0.97);">Data1</div>
<div class="t" style="left:629.00px;top:287.47px;font-size:11.5px;line-height:11.5px;color:#2b2b2b;font-weight:bold;transform:scaleX(0.97);">Data2</div>
<div class="t" style="left:713.00px;top:287.47px;font-size:11.5px;line-height:11.5px;color:#2b2b2b;font-weight:bold;transform:scaleX(0.97);">Data3</div>
<div class="t" style="left:335.00px;top:320.84px;font-size:12px;line-height:12px;color:#555d6b;font-weight:normal;-webkit-text-stroke:0.15px #555d6b;">Germany</div>
<div class="t" style="left:545.00px;top:320.84px;font-size:12px;line-height:12px;color:#555d6b;font-weight:normal;-webkit-text-stroke:0.15px #555d6b;">188400</div>
<div class="t" style="left:629.00px;top:320.84px;font-size:12px;line-height:12px;color:#555d6b;font-weight:normal;-webkit-text-stroke:0.15px #555d6b;">52000</div>
<div class="t" style="left:713.00px;top:320.84px;font-size:12px;line-height:12px;color:#555d6b;font-weight:normal;-webkit-text-stroke:0.15px #555d6b;">240400</div>
<div class="t" style="left:335.00px;top:351.14px;font-size:12px;line-height:12px;color:#555d6b;font-weight:normal;-webkit-text-stroke:0.15px #555d6b;">France</div>
<div class="t" style="left:545.00px;top:351.14px;font-size:12px;line-height:12px;color:#555d6b;font-weight:normal;-webkit-text-stroke:0.15px #555d6b;">192200</div>
<div class="t" style="left:629.00px;top:351.14px;font-size:12px;line-height:12px;color:#555d6b;font-weight:normal;-webkit-text-stroke:0.15px #555d6b;">12000</div>
<div class="t" style="left:713.00px;top:351.14px;font-size:12px;line-height:12px;color:#555d6b;font-weight:normal;-webkit-text-stroke:0.15px #555d6b;">204200</div>
<div class="t" style="left:335.00px;top:381.44px;font-size:12px;line-height:12px;color:#555d6b;font-weight:normal;-webkit-text-stroke:0.15px #555d6b;">Poland</div>
<div class="t" style="left:545.00px;top:381.44px;font-size:12px;line-height:12px;color:#555d6b;font-weight:normal;-webkit-text-stroke:0.15px #555d6b;">68900</div>
<div class="t" style="left:629.00px;top:381.44px;font-size:12px;line-height:12px;color:#555d6b;font-weight:normal;-webkit-text-stroke:0.15px #555d6b;">8000</div>
<div class="t" style="left:713.00px;top:381.44px;font-size:12px;line-height:12px;color:#555d6b;font-weight:normal;-webkit-text-stroke:0.15px #555d6b;">76900</div>
<div class="t" style="left:335.00px;top:411.74px;font-size:12px;line-height:12px;color:#555d6b;font-weight:normal;-webkit-text-stroke:0.15px #555d6b;">Japan</div>
<div class="t" style="left:545.00px;top:411.74px;font-size:12px;line-height:12px;color:#555d6b;font-weight:normal;-webkit-text-stroke:0.15px #555d6b;">140000</div>
<div class="t" style="left:629.00px;top:411.74px;font-size:12px;line-height:12px;color:#555d6b;font-weight:normal;-webkit-text-stroke:0.15px #555d6b;">14000</div>
<div class="t" style="left:713.00px;top:411.74px;font-size:12px;line-height:12px;color:#555d6b;font-weight:normal;-webkit-text-stroke:0.15px #555d6b;">154000</div>
<div class="t" style="left:335.00px;top:442.04px;font-size:12px;line-height:12px;color:#555d6b;font-weight:normal;-webkit-text-stroke:0.15px #555d6b;">China</div>
<div class="t" style="left:545.00px;top:442.04px;font-size:12px;line-height:12px;color:#555d6b;font-weight:normal;-webkit-text-stroke:0.15px #555d6b;">50000</div>
<div class="t" style="left:629.00px;top:442.04px;font-size:12px;line-height:12px;color:#555d6b;font-weight:normal;-webkit-text-stroke:0.15px #555d6b;">4800</div>
<div class="t" style="left:713.00px;top:442.04px;font-size:12px;line-height:12px;color:#555d6b;font-weight:normal;-webkit-text-stroke:0.15px #555d6b;">54800</div>
</body></html>
